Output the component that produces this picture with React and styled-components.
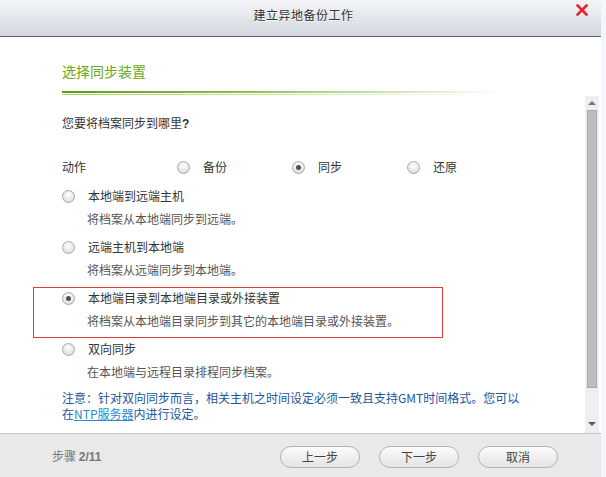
import React, { useState } from 'react';
import styled, { createGlobalStyle } from 'styled-components';

const GlobalStyle = createGlobalStyle`
    html, body {
        margin: 0;
        padding: 0;
        background: #f3f6fb;
    }
    body {
        font-family: "Noto Sans CJK SC", "Liberation Sans", sans-serif;
        font-size: 12px;
        color: #333;
    }
`;

const Window = styled.div`
    width: 601px;
    height: 477px;
    display: flex;
    flex-direction: column;
    background: #ffffff;
    overflow: hidden;
`;

const TitleBar = styled.div`
    height: 36px;
    flex: none;
    display: flex;
    align-items: center;
    justify-content: center;
    position: relative;
    background: linear-gradient(#f3f5f8, #d3d8df);
    border-bottom: 1px solid #5c6168;
`;

const Title = styled.div`
    font-size: 12px;
    color: #333;
    letter-spacing: 0.5px;
    margin-left: 6px;
    margin-top: -8px;
    text-shadow: 0 1px 0 rgba(255, 255, 255, 0.7);
`;

const Close = styled.button`
    position: absolute;
    right: 13px;
    top: 4px;
    width: 12px;
    height: 12px;
    padding: 0;
    border: 0;
    background: none;
    cursor: pointer;
    display: flex;
`;

const Header = styled.div`
    flex: none;
    padding: 24px 0 0 62px;
`;

const SectionTitle = styled.div`
    font-size: 14px;
    line-height: 20px;
    color: #6aa81c;
`;

const Rule = styled.div`
    margin-top: 10px;
    width: 440px;
    height: 2px;
    background: linear-gradient(to right, #5f9e12 0%, #8cc04a 40%, rgba(140, 192, 74, 0) 100%);
    &::after {
        content: '';
        display: block;
        position: relative;
        top: 3px;
        height: 1px;
        background: linear-gradient(to right, #a9d46e 0%, #cde6ab 50%, rgba(205, 230, 171, 0) 100%);
    }
`;

const ScrollArea = styled.div`
    flex: 1;
    display: flex;
    margin-top: 3px;
    min-height: 0;
`;

const Body = styled.div`
    flex: 1;
    padding: 19px 0 0 62px;
`;

const Question = styled.div`
    line-height: 16px;
    color: #333;
`;

const Latin = styled.span`
    font-family: "Liberation Sans", "Noto Sans CJK SC", sans-serif;
    font-weight: bold;
    line-height: 16px;
`;

const ActionRow = styled.div`
    margin-top: 27px;
    display: grid;
    grid-template-columns: 115px 115px 115px 115px;
    align-items: center;
    line-height: 16px;
`;

const Choice = styled.label`
    display: flex;
    align-items: center;
    gap: 13px;
    cursor: pointer;
`;

const Radio = styled.span`
    width: 11px;
    height: 11px;
    flex: none;
    border-radius: 50%;
    border: 1px solid #a9a9a9;
    background: radial-gradient(circle at 50% 35%, #ffffff 0%, #e6e6e6 60%, #d2d2d2 100%);
    display: flex;
    align-items: center;
    justify-content: center;
    &::after {
        content: '';
        width: 5px;
        height: 5px;
        border-radius: 50%;
        background: #505050;
        display: ${props => props.checked ? 'block' : 'none'};
    }
`;

const Options = styled.div`
    margin: 10px 0 0 -29px;
    width: 410px;
`;

const Option = styled.div`
    padding: 2px 0 8px 28px;
    border: 1px solid ${props => props.selected ? '#e33a3a' : 'transparent'};
    cursor: pointer;
`;

const OptionLabel = styled.div`
    display: flex;
    align-items: center;
    gap: 13px;
    line-height: 16px;
    color: #333;
`;

const OptionDesc = styled.div`
    margin: 7px 0 0 25px;
    line-height: 16px;
    color: #555;
`;

const Note = styled.div`
    margin-top: 1px;
    color: #21559c;
`;

const NoteLine = styled.div`
    line-height: 16px;
    white-space: nowrap;
`;

const Link = styled.a`
    color: #2a8ad6;
    text-decoration: underline;
    cursor: pointer;
`;

const ScrollBar = styled.div`
    width: 14px;
    flex: none;
    margin-right: 2px;
    background: #efefef;
    display: flex;
    flex-direction: column;
    align-items: center;
`;

const Arrow = styled.div`
    width: 0;
    height: 0;
    border-left: 4px solid transparent;
    border-right: 4px solid transparent;
    ${props => props.down
        ? 'border-top: 4px solid #555; margin-top: auto; margin-bottom: 7px;'
        : 'border-bottom: 4px solid #777; margin-top: 5px;'}
`;

const Thumb = styled.div`
    width: 10px;
    height: 278px;
    margin-top: 5px;
    background: #bdbdbd;
    border: 1px solid #a8a8a8;
    box-sizing: border-box;
`;

const Footer = styled.div`
    height: 43px;
    flex: none;
    display: flex;
    align-items: center;
    padding: 0 0 0 52px;
    background: #e9e9e9;
    border-top: 1px solid #c6c6c6;
`;

const Step = styled.div`
    color: #777;
    width: 228px;
`;

const Buttons = styled.div`
    display: flex;
    gap: 19px;
    margin-top: 2px;
`;

const Button = styled.button`
    width: 80px;
    height: 22px;
    border-radius: 11px;
    border: 1px solid #b4b4b4;
    background: linear-gradient(#fbfbfb, #e4e4e4);
    font-family: "Noto Sans CJK SC", "Liberation Sans", sans-serif;
    font-size: 12px;
    color: #444;
    padding: 0;
    line-height: 20px;
    cursor: pointer;
`;

const actions = ['备份', '同步', '还原'];

const options = [
    { label: '本地端到远端主机', desc: '将档案从本地端同步到远端。' },
    { label: '远端主机到本地端', desc: '将档案从远端同步到本地端。' },
    { label: '本地端目录到本地端目录或外接装置', desc: '将档案从本地端目录同步到其它的本地端目录或外接装置。' },
    { label: '双向同步', desc: '在本地端与远程目录排程同步档案。' },
];

const App = () => {
    const [action, setAction] = useState(1);
    const [target, setTarget] = useState(2);

    return (
        <Window>
            <GlobalStyle />
            <TitleBar>
                <Title>建立异地备份工作</Title>
                <Close aria-label="关闭">
                    <svg width="12" height="12" viewBox="0 0 12 12">
                        <path d="M1.5 1.5 L10.5 10.5 M10.5 1.5 L1.5 10.5" stroke="#e8262a" strokeWidth="2.6" strokeLinecap="square" />
                    </svg>
                </Close>
            </TitleBar>
            <Header>
                <SectionTitle>选择同步装置</SectionTitle>
                <Rule />
            </Header>
            <ScrollArea>
                <Body>
                    <Question>您要将档案同步到哪里<Latin>?</Latin></Question>
                    <ActionRow>
                        <span>动作</span>
                        {actions.map((a, i) => (
                            <Choice key={a} onClick={() => setAction(i)}>
                                <Radio checked={action === i} />
                                {a}
                            </Choice>
                        ))}
                    </ActionRow>
                    <Options>
                        {options.map((o, i) => (
                            <Option key={o.label} selected={target === i} onClick={() => setTarget(i)}>
                                <OptionLabel>
                                    <Radio checked={target === i} />
                                    {o.label}
                                </OptionLabel>
                                <OptionDesc>{o.desc}</OptionDesc>
                            </Option>
                        ))}
                    </Options>
                    <Note>
                        <NoteLine>注意：针对双向同步而言，相关主机之时间设定必须一致且支持GMT时间格式。您可以</NoteLine>
                        <NoteLine>在<Link>NTP服务器</Link>内进行设定。</NoteLine>
                    </Note>
                </Body>
                <ScrollBar>
                    <Arrow />
                    <Thumb />
                    <Arrow down />
                </ScrollBar>
            </ScrollArea>
            <Footer>
                <Step>步骤 <Latin>2/11</Latin></Step>
                <Buttons>
                    <Button>上一步</Button>
                    <Button>下一步</Button>
                    <Button>取消</Button>
                </Buttons>
            </Footer>
        </Window>
    );
};

export default App;
